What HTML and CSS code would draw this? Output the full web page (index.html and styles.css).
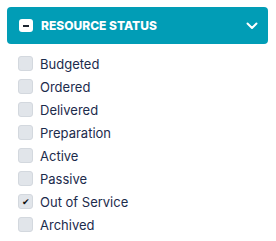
FILE: index.html
```html
<!DOCTYPE html>
<html lang="en">
<head>
  <meta charset="UTF-8">
  <title>Resource Status</title>
  <link rel="stylesheet" href="styles.css">
</head>
<body>
  <div class="panel">
    <div class="panel-header">
      <span class="toggle-box"><span class="minus"></span></span>
      <span class="panel-title">RESOURCE STATUS</span>
      <svg class="chevron" width="12" height="8" viewBox="0 0 12 8">
        <path d="M1.5 1.5 L6 6 L10.5 1.5" fill="none" stroke="#fff" stroke-width="2" stroke-linecap="round" stroke-linejoin="round"/>
      </svg>
    </div>
    <ul class="status-list">
      <li><span class="check"></span>Budgeted</li>
      <li><span class="check"></span>Ordered</li>
      <li><span class="check"></span>Delivered</li>
      <li><span class="check"></span>Preparation</li>
      <li><span class="check"></span>Active</li>
      <li><span class="check"></span>Passive</li>
      <li><span class="check checked">&#10004;</span>Out of Service</li>
      <li><span class="check"></span>Archived</li>
    </ul>
  </div>
</body>
</html>
```

FILE: styles.css
```css
body {
  margin: 0;
  padding: 7px 8px 0 7px;
  background: #fff;
  font-family: Inter, "Noto Sans", sans-serif;
}

.panel {
  width: 261px;
}

.panel-header {
  display: flex;
  align-items: center;
  height: 37px;
  padding: 0 10px 0 12px;
  background: #019db6;
  border-radius: 4px;
  box-sizing: border-box;
}

.toggle-box {
  display: flex;
  justify-content: center;
  align-items: center;
  width: 14px;
  height: 13px;
  background: #fff;
  border-radius: 3px;
}

.minus {
  width: 6px;
  height: 2px;
  background: #1b2430;
}

.panel-title {
  flex: 1;
  margin-left: 8px;
  color: #fff;
  font-size: 12px;
  font-weight: 800;
}

.status-list {
  list-style: none;
  margin: 8px 0 0;
  padding: 0 0 0 11px;
}

.status-list li {
  display: flex;
  align-items: center;
  height: 23px;
  color: #1c2b4c;
  font-size: 13px;
}

.check {
  display: flex;
  justify-content: center;
  align-items: center;
  width: 13px;
  height: 13px;
  margin-right: 7px;
  background: #e1e5ea;
  border: 1px solid #d3d8de;
  border-radius: 3px;
  font-size: 9px;
  color: #111;
}
```
